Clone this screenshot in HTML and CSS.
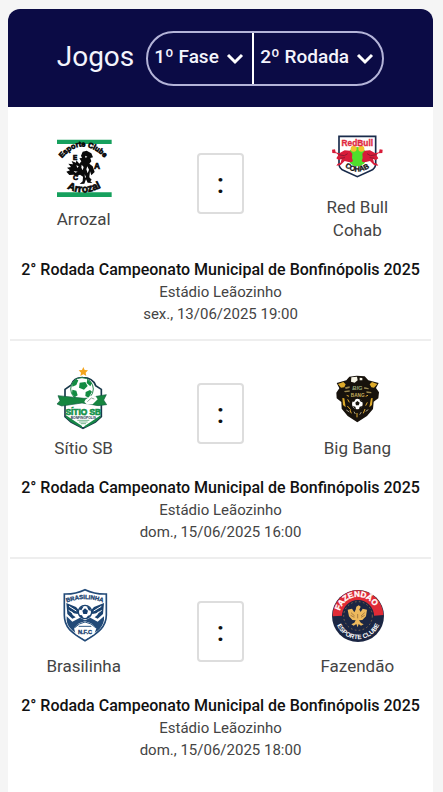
FILE: index.html
```html
<!DOCTYPE html>
<html lang="pt-BR">
<head>
<meta charset="utf-8">
<meta name="viewport" content="width=device-width, initial-scale=1">
<title>Jogos</title>
<link rel="stylesheet" href="styles.css">
</head>
<body>
<main class="card">
  <header class="card-header">
    <h1 class="title">Jogos</h1>
    <div class="filters">
      <div class="filter">
        <select class="filter-select" aria-label="Fase"><option>1º Fase</option></select>
        <svg class="chevron" viewBox="0 0 18 12" aria-hidden="true"><path d="M2 2l7 7 7-7"/></svg>
      </div>
      <div class="filter">
        <select class="filter-select" aria-label="Rodada"><option>2º Rodada</option></select>
        <svg class="chevron" viewBox="0 0 18 12" aria-hidden="true"><path d="M2 2l7 7 7-7"/></svg>
      </div>
    </div>
  </header>

  <section class="match">
    <div class="teams">
      <div class="team">
        <svg class="crest" viewBox="21 22 192 192" aria-hidden="true">
          <path fill="#16a05d" d="M36 30h164v13H36zM36 188h164v14H36z"/>
          <path id="arc-a" fill="none" d="M51 86Q112 14 182 88"/>
          <path id="arc-b" fill="none" d="M66 176Q118 203 176 169"/>
          <g font-family="Liberation Sans" font-weight="bold" fill="#080808" stroke="#080808" stroke-width="2">
            <text font-size="22"><textPath href="#arc-a">Esporte Clube</textPath></text>
            <text font-size="31"><textPath href="#arc-b">Arrozal</textPath></text>
            <text x="84" y="92" font-size="19">E</text>
            <text x="147" y="119" font-size="25">A</text>
            <text x="84" y="152" font-size="21">C</text>
          </g>
          <path fill="#0a0a0a" d="M108 78l5-12 12-3 14 8 5 12-8 2 3 10-6 7 10 8 6 17-10 10-4-12-2 18 7 7-4 5 6 5-14-1-5-10-5 13-14 1 9-8 1-14-9-6-9 4-10-4-13 1-9-10 11-4-9-8 12-2-8-10 14 2-4-10 13 5 1-7 9 10 6-7-6-9 8-1z"/>
          <path fill="#fff" d="M120 78l7 3-5 4zM110 105l6 7-3 10-4-8zM94 107l7 3-4 5zM127 110l5 10-4 11-4-12zM86 124l12 2-7 3zM119 134l4 8-3 3z"/>
        </svg>
        <span class="team-name">Arrozal</span>
      </div>
      <div class="score">:</div>
      <div class="team">
        <svg class="crest" viewBox="15 3 192 192" aria-hidden="true">
          <path fill="#fff" stroke="#192b4b" stroke-width="5" d="M57 37H167V119Q167 134 151 140L112 158L73 140Q57 134 57 119Z"/>
          <circle cx="112" cy="98" r="29" fill="#4fe02b"/>
          <circle cx="101" cy="74" r="9" fill="#f2c32d"/><circle cx="124" cy="74" r="9" fill="#f2c32d"/>
          <path fill="#d81c39" d="M36 77l9-1 2 9 11 3 16-9 16 1 7 9-1 13 3 9-5 4-8-1-12-3-12 12-13 2 4-6 9-3 3-12-8 5-8-6 6-10-6-5-12-1z"/>
          <path fill="#d81c39" d="M188 77l-9-1-2 9-11 3-16-9-16 1-7 9 1 13-3 9 5 4 8-1 12-3 12 12 13 2-4-6-9-3-3-12 8 5 8-6-6-10 6-5 12-1z"/>
          <path stroke="#8f1831" stroke-width="3" fill="none" d="M55 92l18 3 10-6M169 92l-18 3-10-6M61 103l14-2M163 103l-14-2"/>
          <text x="112" y="65" text-anchor="middle" font-family="Liberation Sans" font-weight="bold" font-size="25" fill="#e02a40" stroke="#e02a40">RedBull</text>
          <path id="arc-c" fill="none" d="M74 128Q112 158 154 127"/>
          <text font-family="Liberation Sans" font-weight="bold" font-size="22" fill="#111" stroke="#111"><textPath href="#arc-c">COHAB</textPath></text>
        </svg>
        <span class="team-name">Red Bull Cohab</span>
      </div>
    </div>
    <h2 class="round">2° Rodada Campeonato Municipal de Bonfinópolis 2025</h2>
    <p class="detail">Estádio Leãozinho</p>
    <p class="detail">sex., 13/06/2025 19:00</p>
  </section>

  <section class="match">
    <div class="teams">
      <div class="team">
        <svg class="crest" viewBox="21 18 192 192" aria-hidden="true">
          <path fill="#f4a51f" d="M115 21l4 9 10 1-7 7 2 10-9-5-9 5 2-10-7-7 10-1z"/>
          <path fill="#fff" stroke="#18384a" stroke-width="5" d="M79 75Q86 52 114 53Q143 53 152 77L169 88V170L151 186L114 205L78 186L60 170V88Z"/>
          <circle cx="111" cy="87" r="34" fill="#fff" stroke="#23864b" stroke-width="3"/>
          <path fill="#138b42" d="M104 68l17-2 7 12-11 11-15-6zM81 70l11-12 8 3-6 14-12 5zM127 58l14 12-5 9-11-10zM82 89l12 3 4 14-9 6-8-11zM122 96l13-6 6 5-10 18-10-5z"/>
          <path fill="#16863f" stroke="#145e42" stroke-width="2" d="M39 107l30 3 48 5 18-1 19-5 30-5-8 16 9 14-26 3-48-8-61 9-14-6 9-10z"/>
          <path fill="#fff" d="M121 119l16-12 15 2 6 9-15 15-16 1-9-8z"/>
          <path stroke="#91aa9a" stroke-width="3" fill="none" d="M127 125l12-11 9 3"/>
          <path fill="#fff" d="M64 140l48-8 53 8v27H64z"/>
          <text x="115" y="164" text-anchor="middle" font-family="Liberation Sans" font-weight="bold" font-size="25" fill="#15934b" stroke="#15934b" stroke-width="2">SÍTIO SB</text>
          <text x="115" y="176" text-anchor="middle" font-family="Liberation Sans" font-weight="bold" font-size="10" fill="#18384a">BONFINÓPOLIS</text>
          <path fill="#168746" d="M63 166l48 32v6l-33-18-16-14zM167 166l-48 32v6l32-18 16-14z"/>
          <path stroke="#38925b" stroke-width="2" d="M97 181h36M102 186h26M107 191h16"/>
        </svg>
        <span class="team-name">Sítio SB</span>
      </div>
      <div class="score">:</div>
      <div class="team">
        <svg class="crest" viewBox="15 3 192 192" aria-hidden="true">
          <path fill="#17120c" d="M50 54l29-8 9-11 22-3 24 2 11 12 31 8-8 15 9 13-2 18-14 10-2 22-18 21-29 19-29-19-18-22-1-20-14-11-1-17 9-13z"/>
          <path fill="#ddaa2a" d="M54 57l16-6 7 7-4 9-10 1zM172 57l-16-6-7 7 5 9 8 1zM67 99l6 1 4 27-8-7zM158 99l-5 1-5 27 8-7z"/>
          <path fill="#f8f6e8" d="M94 37l17-2 2 11-9 7-11-3zM119 38l8 1v7h-8z"/>
          <path fill="#99864e" d="M75 67l14-3v5l-12 3zM133 66l13 4v3l-14-2zM72 78l17-2v4l-14 2zM139 79l15 2v4l-14-1z"/>
          <text x="112" y="76" text-anchor="middle" font-family="Liberation Sans" font-weight="bold" font-style="italic" font-size="17" fill="#9aa879">BIG</text>
          <text x="113" y="95" text-anchor="middle" font-family="Liberation Sans" font-weight="bold" font-size="14" fill="#c4ad5d">BANG</text>
          <circle cx="112" cy="117" r="16" fill="#fff"/>
          <path fill="#16130d" d="M106 113l6-5 7 5-3 8h-8zM96 108l7-6 4 1-5 8zM121 103l7 7-5 1-5-7zM98 123l8 2 2 7-4-1zM119 125l8-2-4 8-6 1z"/>
          <path stroke="#dfaa31" stroke-width="3" fill="none" d="M83 103l5 9M82 123l10 11M94 145l-4-10M111 144v13M135 132l-5 13M142 112l-5 10M87 94l-7-3M137 94l7-3"/>
          <path stroke="#eee5c6" stroke-width="2" d="M79 135l9 6M102 140l4 7M124 141l-5 8M137 139l8-5"/>
        </svg>
        <span class="team-name">Big Bang</span>
      </div>
    </div>
    <h2 class="round">2° Rodada Campeonato Municipal de Bonfinópolis 2025</h2>
    <p class="detail">Estádio Leãozinho</p>
    <p class="detail">dom., 15/06/2025 16:00</p>
  </section>

  <section class="match">
    <div class="teams">
      <div class="team">
        <svg class="crest" viewBox="21 12 192 192" aria-hidden="true">
          <path fill="#fff" stroke="#224a78" stroke-width="5" d="M58 42Q91 43 120 29Q149 43 184 42V105Q184 130 167 148Q151 164 120 182Q89 164 73 148Q58 130 58 105Z"/>
          <path fill="#224a78" d="M65 109l17 16 23-12 15 8 16-8 22 12 19-16v11q-3 19-20 33l-37 21-36-21q-18-15-19-33z"/>
          <path fill="#1b4370" d="M64 69l29 12 10 11-5 10-12-2-9-8 6 13 9 7-10 4-15-14zM177 69l-30 12-10 11 5 10 12-2 10-8-7 13-8 7 9 4 16-14z"/>
          <path stroke="#fff" stroke-width="3" fill="none" d="M72 79l22 14M71 91l18 13M169 79l-23 14M170 91l-18 13"/>
          <circle cx="120" cy="96" r="20" fill="#fff" stroke="#1b4370" stroke-width="4"/>
          <path fill="#153d6d" d="M112 92l8-7 9 7-3 10h-11zM102 88l8-8 6-1-7 12zM125 78l9 5 4 9-7-1zM103 105l8 1 4 8-6-1zM128 108l8-4-7 10-5 1z"/>
          <path id="arc-d" fill="none" d="M65 68Q120 46 179 69"/>
          <text font-family="Liberation Sans" font-weight="bold" font-size="18" fill="#1b4370" stroke="#1b4370"><textPath href="#arc-d">BRASILINHA</textPath></text>
          <path fill="#fff" d="M87 145l15-15 18-6 18 6 16 15-6 17-28 16-28-16z"/>
          <path stroke="#315b86" stroke-width="3" fill="none" d="M88 144l15-12 17-6 18 6 15 12M101 139h38"/>
          <text x="120" y="161" text-anchor="middle" font-family="Liberation Sans" font-weight="bold" font-size="17" fill="#1b4370" stroke="#1b4370">N.F.C</text>
        </svg>
        <span class="team-name">Brasilinha</span>
      </div>
      <div class="score">:</div>
      <div class="team">
        <svg class="crest" viewBox="15 12 192 192" aria-hidden="true">
          <circle cx="114" cy="108" r="78" fill="#1b2643"/>
          <path fill="#e02b36" d="M38 109A76 76 0 0 1 190 105L162 107A49 49 0 0 0 66 107Z"/>
          <circle cx="114" cy="108" r="48" fill="#1b2643"/>
          <circle cx="114" cy="108" r="43" fill="none" stroke="#a9834f" stroke-width="2" stroke-dasharray="5 7"/>
          <path id="arc-e" fill="none" d="M60 92A56 56 0 0 1 169 96"/>
          <path id="arc-f" fill="none" d="M51 136A69 69 0 0 0 179 132"/>
          <g font-family="Liberation Sans" font-weight="bold" fill="#fff">
            <text font-size="24" stroke="#fff"><textPath href="#arc-e">FAZENDÃO</textPath></text>
            <text font-size="19"><textPath href="#arc-f">ESPORTE CLUBE</textPath></text>
          </g>
          <path fill="#edb95d" d="M109 80l7-4 6 4-4 9 4 7 6-10 13 3-3 20-11 11-10 1 6 8 8 4-8 4-7-5-3 10-4-10-8 5-7-4 9-5 4-7-10-1-10-11-4-20 13-3 7 11 4-8z"/>
          <path stroke="#855e35" stroke-width="2" fill="none" d="M93 98l11 10M92 106l11 6M134 98l-11 10M134 106l-11 6M113 102v13"/>
        </svg>
        <span class="team-name">Fazendão</span>
      </div>
    </div>
    <h2 class="round">2° Rodada Campeonato Municipal de Bonfinópolis 2025</h2>
    <p class="detail">Estádio Leãozinho</p>
    <p class="detail">dom., 15/06/2025 18:00</p>
  </section>
</main>
</body>
</html>
```
FILE: styles.css
```css
* {
  box-sizing: border-box;
}

body {
  margin: 0;
  padding: 9px 10px 0 8px;
  background: #f5f5f5;
  color: #444;
  font-family: Roboto, "Liberation Sans", sans-serif;
}

.card {
  min-height: calc(100vh - 9px);
  background: #fff;
  border-radius: 12px 12px 0 0;
  overflow: hidden;
}

.card-header {
  display: flex;
  align-items: center;
  justify-content: center;
  gap: 12px;
  padding: 22px 16px 21px;
  background: #0b0b45;
  color: #f4f4fc;
}

.title {
  margin: 0;
  padding-bottom: 4px;
  font-size: 28px;
  font-weight: 400;
  line-height: 32px;
}

.filters {
  display: flex;
  height: 55px;
  border: 2px solid #b4b4d8;
  border-radius: 28px;
}

.filter {
  display: grid;
  align-items: center;
}

.filter + .filter {
  border-left: 2px solid #fff;
}

.filter-select,
.chevron {
  grid-area: 1 / 1;
}

.filter-select {
  height: 100%;
  padding: 0 33px 4px 6px;
  border: 0;
  background: transparent;
  color: inherit;
  font: 500 19px Roboto, "Liberation Sans", sans-serif;
  appearance: none;
}

.filter-select option {
  color: #222;
}

.chevron {
  justify-self: end;
  width: 18px;
  height: 12px;
  margin-right: 8px;
  fill: none;
  stroke: #fff;
  stroke-width: 3;
  pointer-events: none;
}

.match {
  margin: 0 2px;
  padding: 25px 0 14px;
  border-bottom: 2px solid #eee;
  text-align: center;
}

.match:first-of-type {
  padding-top: 18px;
}

.match:last-of-type {
  border-bottom: 0;
}

.teams {
  display: grid;
  grid-template-columns: 35% 30% 35%;
  align-items: center;
  justify-items: center;
  margin-bottom: 17px;
}

.team {
  display: flex;
  flex-direction: column;
  align-items: center;
  gap: 7px;
}

.crest {
  width: 64px;
  height: 64px;
}

.team-name {
  max-width: 88px;
  font-size: 17px;
  line-height: 23px;
}

.score {
  display: grid;
  place-items: center;
  width: 47px;
  height: 61px;
  border: 2px solid #ddd;
  border-radius: 4px;
  color: #111;
  font-size: 28px;
  font-weight: 500;
}

.round,
.detail {
  margin: 0;
  line-height: 22px;
}

.round {
  color: #111;
  font-size: 16px;
  font-weight: 500;
}

.detail {
  font-size: 15px;
  font-weight: 400;
}
```
